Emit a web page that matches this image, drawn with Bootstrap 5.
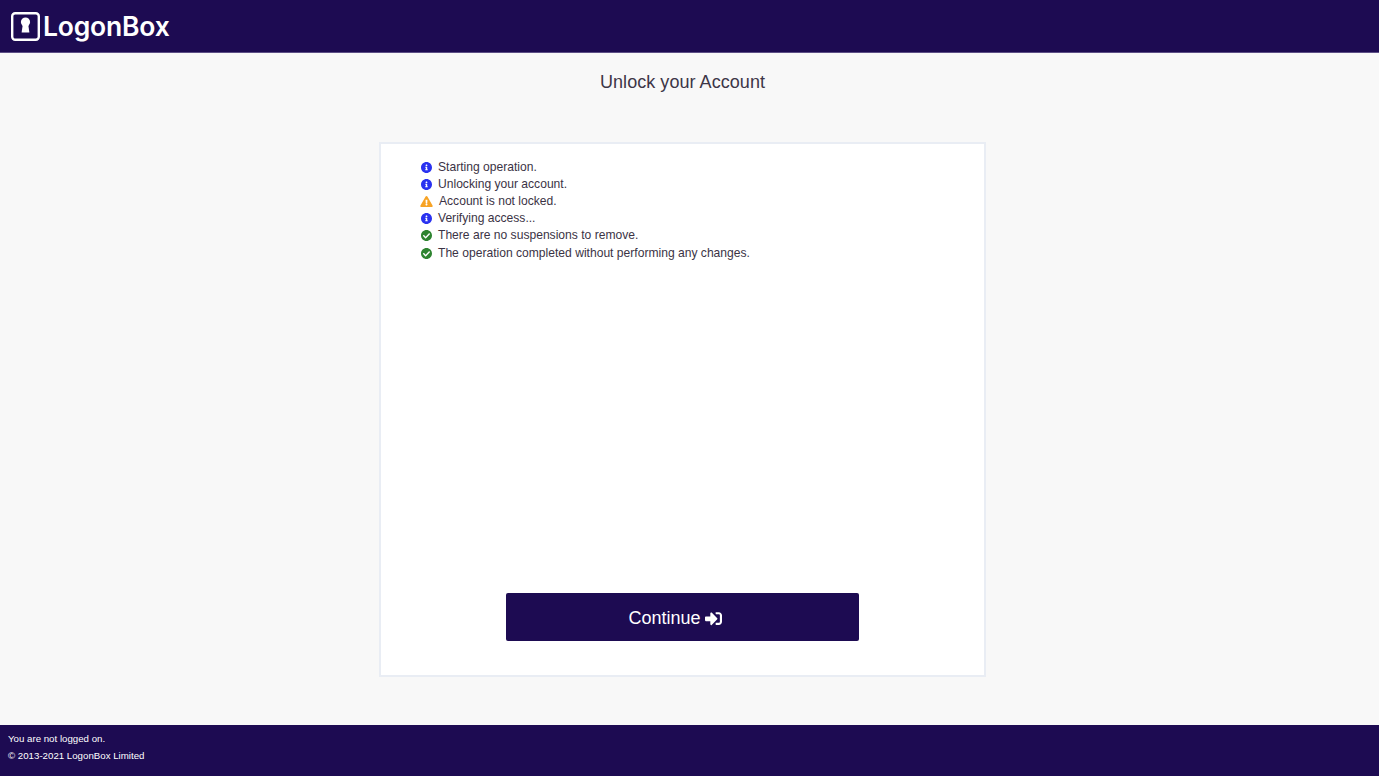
<!DOCTYPE html>
<html lang="en">
<head>
    <meta charset="UTF-8">
    <title>Unlock your Account</title>
    <link href="https://cdn.jsdelivr.net/npm/bootstrap@5.3.3/dist/css/bootstrap.min.css" rel="stylesheet">
    <style>
        html, body {
            height: 100%;
        }

        body {
            background-color: #f8f8f8;
            font-family: "Liberation Sans", Arial, sans-serif;
            color: #3b3345;
            overflow: hidden;
        }

        .page-wrap {
            height: 776px;
        }

        .top-bar {
            height: 53px;
            background-color: #1d0b52;
            border-bottom: 1px solid #5d4f86;
            padding-left: 11px;
        }

        .logo-text {
            font-family: "Inter", sans-serif;
            font-size: 26.5px;
            font-weight: 600;
            color: #fff;
            line-height: 1;
            margin-left: 3px;
            letter-spacing: -.2px;
        }

        .page-body {
            padding-right: 14px;
        }

        .page-title {
            font-size: 18px;
            line-height: 20px;
            font-weight: 400;
            margin: 19px 0 50px;
            color: #3d3647;
            letter-spacing: .05px;
        }

        .unlock-panel {
            width: 607px;
            height: 535px;
            background-color: #fff;
            border: 2px solid #e9edf4;
            padding: 14.5px 40px 34px;
        }

        .log-list {
            font-size: 12.1px;
            line-height: 17px;
            color: #3b3345;
        }

        .log-list svg {
            flex: none;
            width: 11px;
            height: 11px;
            margin-right: 6px;
        }

        .log-list li {
            height: 17.2px;
        }

        .log-list .warn-icon {
            width: 13px;
            margin-left: -1px;
        }

        .icon-info {
            fill: #2a32f0;
        }

        .icon-ok {
            fill: #2e8430;
        }

        .icon-warn {
            fill: #f7a325;
        }

        .continue-btn {
            width: 353px;
            height: 48px;
            background-color: #1d0b52;
            border: 0;
            border-radius: 2px;
            color: #fff;
            font-size: 18px;
            padding: 3px 15px 0 0;
        }

        .continue-btn:hover {
            background-color: #1d0b52;
            color: #fff;
        }

        .bottom-bar {
            height: 51px;
            background-color: #1d0b52;
            color: #fff;
            font-size: 9.7px;
            line-height: 17px;
            padding: 5px 8px 0;
        }
    </style>
</head>
<body>
<svg class="d-none" aria-hidden="true">
    <symbol id="info-circle" viewBox="8 8 496 496"><path d="M256 8C119.043 8 8 119.083 8 256c0 136.997 111.043 248 248 248s248-111.003 248-248C504 119.083 392.957 8 256 8zm0 110c23.196 0 42 18.804 42 42s-18.804 42-42 42-42-18.804-42-42 18.804-42 42-42zm56 254c0 6.627-5.373 12-12 12h-88c-6.627 0-12-5.373-12-12v-24c0-6.627 5.373-12 12-12h12v-64h-12c-6.627 0-12-5.373-12-12v-24c0-6.627 5.373-12 12-12h64c6.627 0 12 5.373 12 12v100h12c6.627 0 12 5.373 12 12v24z"/></symbol>
    <symbol id="check-circle" viewBox="8 8 496 496"><path d="M504 256c0 136.967-111.033 248-248 248S8 392.967 8 256 119.033 8 256 8s248 111.033 248 248zM227.314 387.314l184-184c6.248-6.248 6.248-16.379 0-22.627l-22.627-22.627c-6.248-6.249-16.379-6.249-22.628 0L216 308.118l-70.059-70.059c-6.248-6.248-16.379-6.248-22.628 0l-22.627 22.627c-6.248 6.248-6.248 16.379 0 22.627l104 104c6.249 6.250 16.379 6.250 22.628.001z"/></symbol>
    <symbol id="warn-triangle" viewBox="0 0 576 512"><path d="M569.517 440.013C587.975 472.007 564.806 512 527.94 512H48.054c-36.937 0-59.999-40.055-41.577-71.987L246.423 23.985c18.467-32.009 64.72-31.951 83.154 0l239.94 416.028zM288 354c-25.405 0-46 20.595-46 46s20.595 46 46 46 46-20.595 46-46-20.595-46-46-46zm-43.673-165.346l7.418 136c.347 6.364 5.609 11.346 11.982 11.346h48.546c6.373 0 11.635-4.982 11.982-11.346l7.418-136c.375-6.874-5.098-12.654-11.982-12.654h-63.383c-6.884 0-12.356 5.780-11.981 12.654z"/></symbol>
</svg>

<div class="page-wrap d-flex flex-column">
    <header class="top-bar d-flex align-items-center">
        <svg width="29" height="29" viewBox="0 0 29 29" aria-hidden="true">
            <rect x="1.2" y="1.2" width="26.6" height="26.6" rx="3" fill="none" stroke="#fff" stroke-width="2.4"/>
            <circle cx="14.5" cy="10" r="4.6" fill="#fff"/>
            <path d="M12 11h5l1.4 9.5h-7.800z" fill="#fff"/>
        </svg>
        <span class="logo-text">LogonBox</span>
    </header>

    <main class="page-body flex-grow-1 d-flex flex-column align-items-center">
        <h1 class="page-title">Unlock your Account</h1>
        <div class="unlock-panel d-flex flex-column">
            <ul class="log-list list-unstyled mb-0 flex-grow-1">
                <li class="d-flex align-items-center"><svg class="icon-info"><use href="#info-circle"/></svg>Starting operation.</li>
                <li class="d-flex align-items-center"><svg class="icon-info"><use href="#info-circle"/></svg>Unlocking your account.</li>
                <li class="d-flex align-items-center"><svg class="icon-warn warn-icon"><use href="#warn-triangle"/></svg>Account is not locked.</li>
                <li class="d-flex align-items-center"><svg class="icon-info"><use href="#info-circle"/></svg>Verifying access...</li>
                <li class="d-flex align-items-center"><svg class="icon-ok"><use href="#check-circle"/></svg>There are no suspensions to remove.</li>
                <li class="d-flex align-items-center"><svg class="icon-ok"><use href="#check-circle"/></svg>The operation completed without performing any changes.</li>
            </ul>
            <div class="d-flex justify-content-center">
                <button type="button" class="btn continue-btn d-flex align-items-center justify-content-center gap-1">
                    Continue
                    <svg width="17" height="17" viewBox="0 0 512 512" fill="#fff" aria-hidden="true"><path d="M416 448h-84c-6.600 0-12-5.400-12-12v-40c0-6.600 5.400-12 12-12h84c17.700 0 32-14.300 32-32V160c0-17.700-14.300-32-32-32h-84c-6.600 0-12-5.400-12-12V76c0-6.600 5.400-12 12-12h84c53 0 96 43 96 96v192c0 53-43 96-96 96zm-47-201L201 79c-15-15-41-4.500-41 17v96H24c-13.300 0-24 10.700-24 24v96c0 13.300 10.700 24 24 24h136v96c0 21.500 26 32 41 17l168-168c9.300-9.400 9.300-24.600 0-34z"/></svg>
                </button>
            </div>
        </div>
    </main>

    <footer class="bottom-bar">
        <div>You are not logged on.</div>
        <div>© 2013-2021 LogonBox Limited</div>
    </footer>
</div>
<script src="https://cdn.jsdelivr.net/npm/bootstrap@5.3.3/dist/js/bootstrap.bundle.min.js"></script>
</body>
</html>
